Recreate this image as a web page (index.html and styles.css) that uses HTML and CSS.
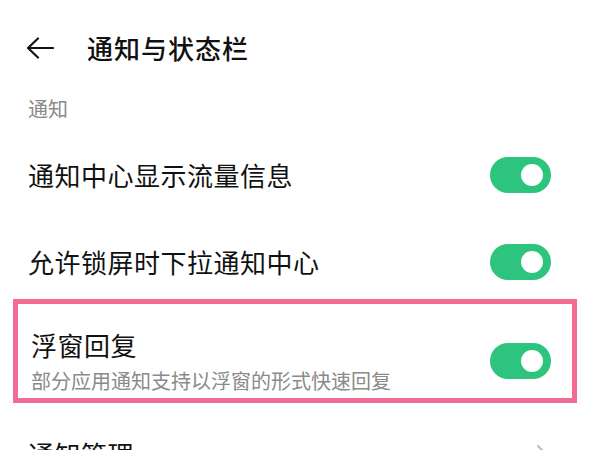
FILE: index.html
```html
<!DOCTYPE html>
<html lang="zh-CN">
<head>
    <meta charset="UTF-8">
    <meta name="viewport" content="width=device-width, initial-scale=1.0">
    <title>通知与状态栏</title>
    <link rel="stylesheet" href="styles.css">
</head>
<body>

    <div class="header">
        <svg class="back" width="28" height="22" viewBox="0 0 28 22">
            <path d="M2 11 H27 M12 1.5 L2 11 L12 20.5" fill="none" stroke="#111" stroke-width="2.2" stroke-linecap="round" stroke-linejoin="round"/>
        </svg>
        <h1 class="title">通知与状态栏</h1>
    </div>

    <div class="section-label">通知</div>

    <div class="row row-first">
        <span class="row-title">通知中心显示流量信息</span>
        <span class="switch"><span class="knob"></span></span>
    </div>

    <div class="row row-second">
        <span class="row-title">允许锁屏时下拉通知中心</span>
        <span class="switch"><span class="knob"></span></span>
    </div>

    <!-- highlighted item -->
    <div class="highlight">
        <div class="row-text">
            <span class="row-title">浮窗回复</span>
            <span class="row-sub">部分应用通知支持以浮窗的形式快速回复</span>
        </div>
        <span class="switch"><span class="knob"></span></span>
    </div>

    <div class="row row-last">
        <span class="row-title">通知管理</span>
        <svg class="chevron" width="12" height="20" viewBox="0 0 12 20">
            <path d="M2 2 L10 10 L2 18" fill="none" stroke="#bdbdbd" stroke-width="2" stroke-linecap="round" stroke-linejoin="round"/>
        </svg>
    </div>

</body>
</html>
```

FILE: styles.css
```css
body {
    margin: 0;
    background: #ffffff;
    font-family: "Noto Sans CJK SC", "Noto Sans", sans-serif;
    color: #111111;
    height: 450px;
    overflow: hidden;
}
.header {
    height: 96px;
    display: flex;
    align-items: center;
    padding-left: 26px;
}
.back {
    display: block;
    margin-right: 33px;
}
.title {
    margin: 0;
    font-size: 26px;
    font-weight: 500;
    letter-spacing: 1px;
    line-height: 34px;
}
.section-label {
    padding-left: 28px;
    font-size: 20px;
    line-height: 26px;
    color: #8a8a8a;
    margin-bottom: 9px;
}
.row {
    display: flex;
    align-items: center;
    justify-content: space-between;
    padding: 0 49px 0 28px;
    box-sizing: border-box;
}
.row-first {
    height: 88px;
}
.row-second {
    height: 80px;
    padding-top: 6px;
}
.row-last {
    height: 102px;
    padding-right: 52px;
}
.row-title {
    font-size: 26px;
    line-height: 34px;
    letter-spacing: 0.5px;
}
.row-text {
    display: flex;
    flex-direction: column;
    gap: 6px;
}
.row-sub {
    font-size: 20px;
    line-height: 26px;
    color: #8a8a8a;
}
.highlight {
    margin: 0 23px 0 13px;
    border: 5px solid #f26b93;
    padding: 24px 21px 4px 13px;
    height: 104px;
    box-sizing: border-box;
    display: flex;
    align-items: center;
    justify-content: space-between;
}
.highlight .row-text {
    align-self: flex-end;
}
.switch {
    width: 61px;
    height: 36px;
    border-radius: 18px;
    background: #2dc47d;
    display: flex;
    align-items: center;
    justify-content: flex-end;
    padding-right: 8px;
    box-sizing: border-box;
    flex-shrink: 0;
}
.highlight .switch {
    margin-top: 0;
}
.knob {
    width: 22px;
    height: 22px;
    border-radius: 50%;
    background: #ffffff;
}
.chevron {
    display: block;
}
```
